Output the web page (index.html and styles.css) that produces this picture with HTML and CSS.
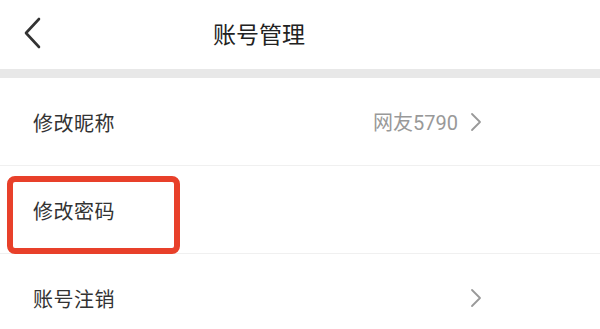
FILE: index.html
```html
<!DOCTYPE html>
<html lang="zh">
<head>
<meta charset="utf-8">
<link rel="stylesheet" href="styles.css">
</head>
<body>
<div class="page">
  <header class="topbar">
    <span class="back">
      <svg width="22" height="32" viewBox="0 0 22 32"><path d="M17 2 L4 16 L17 30" fill="none" stroke="#333" stroke-width="2.6" stroke-linecap="round" stroke-linejoin="round"/></svg>
    </span>
    <h1 class="title">账号管理</h1>
  </header>
  <div class="band"></div>
  <ul class="list">
    <li class="row">
      <span class="label">修改昵称</span>
      <span class="value">网友5790</span>
      <svg class="chev" width="12" height="20" viewBox="0 0 12 20"><path d="M2 2 L10 10 L2 18" fill="none" stroke="#999" stroke-width="1.8" stroke-linecap="round" stroke-linejoin="round"/></svg>
    </li>
    <li class="row highlight-row">
      <span class="label">修改密码</span>
      <span class="mark"></span>
    </li>
    <li class="row">
      <span class="label">账号注销</span>
      <svg class="chev" width="12" height="20" viewBox="0 0 12 20"><path d="M2 2 L10 10 L2 18" fill="none" stroke="#999" stroke-width="1.8" stroke-linecap="round" stroke-linejoin="round"/></svg>
    </li>
  </ul>
</div>
</body>
</html>
```
FILE: styles.css
```css
* { box-sizing: border-box; margin: 0; padding: 0; }
html, body { background: #fff; }
body {
  font-family: "Noto Sans CJK SC", "Noto Sans", sans-serif;
  color: #333;
  overflow: hidden;
}
.page { width: 600px; height: 329px; }
.topbar {
  position: relative;
  height: 69px;
  display: flex;
  align-items: center;
  justify-content: center;
  padding-right: 82px;
}
.back {
  position: absolute;
  left: 22px;
  top: 17px;
  display: flex;
}
.title {
  font-size: 23px;
  font-weight: 400;
  color: #222;
  line-height: 1;
  margin-top: -2px;
}
.band { height: 9px; background: #e8e8e8; }
.list { list-style: none; }
.row {
  position: relative;
  height: 88px;
  display: flex;
  align-items: center;
  padding: 0 0 0 33px;
  border-bottom: 1px solid #f0f0f0;
}
.label {
  font-size: 20px;
  color: #333;
  flex: 1;
  margin-top: 1px;
  letter-spacing: 0.5px;
}
.value {
  font-size: 20px;
  color: #999;
  margin-right: 12px;
  font-family: "Roboto", "Noto Sans CJK SC", sans-serif;
}
.chev { margin-right: 118px; }
.mark {
  position: absolute;
  left: 7px;
  top: 10px;
  width: 173px;
  height: 78px;
  border: 6px solid #e8402a;
  border-radius: 8px;
}
```
